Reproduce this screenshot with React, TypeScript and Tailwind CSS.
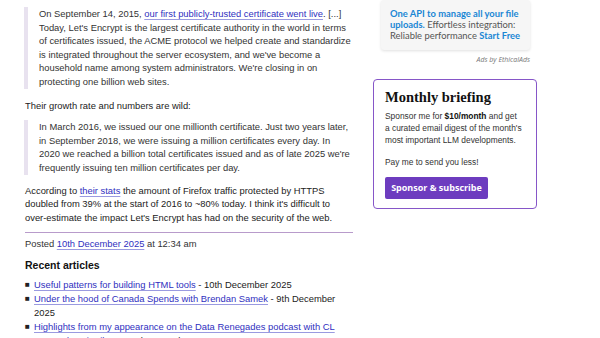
import React from "react";

const link = "text-[#3030c0] underline decoration-[#9a9ae0] underline-offset-[2px]";

const recent = [
  { title: "Useful patterns for building HTML tools", date: "10th December 2025" },
  { title: "Under the hood of Canada Spends with Brendan Samek", date: "9th December 2025" },
  { title: "Highlights from my appearance on the Data Renegades podcast with CL Kao and Dori Wilson", date: "26th November 2025" },
];

export default function App() {
  return (
    <div className="w-[600px] h-[338px] overflow-hidden bg-white flex font-['Liberation_Sans',Arial,sans-serif] text-[#222]">
      {/* Main column */}
      <div className="ml-[24px] w-[329px] shrink-0 pt-[7px] text-[9.4px] leading-[13.6px]">
        <blockquote className="border-l-4 border-[#e8e2ef] pl-[11px] text-[#333]">
          On September 14, 2015, <a className={link}>our first publicly-trusted certificate went live</a>. [...] Today,
          Let's Encrypt is the largest certificate authority in the world in terms of certificates issued, the ACME
          protocol we helped create and standardize is integrated throughout the server ecosystem, and we've become a
          household name among system administrators. We're closing in on protecting one billion web sites.
        </blockquote>
        <p className="mt-[10px] pl-[1px]">Their growth rate and numbers are wild:</p>
        <blockquote className="mt-[8px] border-l-4 border-[#e8e2ef] pl-[11px] text-[#333]">
          In March 2016, we issued our one millionth certificate. Just two years later, in September 2018, we were
          issuing a million certificates every day. In 2020 we reached a billion total certificates issued and as of
          late 2025 we're frequently issuing ten million certificates per day.
        </blockquote>
        <p className="mt-[9px] pl-[1px]">
          According to <a className={link}>their stats</a> the amount of Firefox traffic protected by HTTPS doubled
          from 39% at the start of 2016 to ~80% today. I think it's difficult to over-estimate the impact Let's Encrypt
          has had on the security of the web.
        </p>
        <div className="mt-[8px] ml-[1px] border-t border-[#b89bcb]" />
        <p className="mt-[4px] pl-[1px] text-[#333]">
          Posted <a className={link}>10th December 2025</a> at 12:34 am
        </p>
        <h3 className="mt-[8px] pl-[1px] font-bold text-[10.5px] text-[#111]">Recent articles</h3>
        <ul className="mt-[5px] pl-[9px]">
          {recent.map((r) => (
            <li key={r.title} className="mb-[1px] flex">
              <span className="w-[9px] shrink-0 -ml-[8px] text-[8px]">■</span>
              <span>
                <a className={link}>{r.title}</a> - {r.date}
              </span>
            </li>
          ))}
        </ul>
      </div>

      {/* Sidebar */}
      <div className="ml-[20px] w-[164px] shrink-0 flex flex-col">
        <div className="ml-[8px] w-[149px] bg-[#f6f6f6] rounded-[3px] shadow-[0_1px_3px_rgba(0,0,0,0.12)] px-[9px] pt-[8px] pb-[9px] font-['Lato',sans-serif] text-[9.4px] leading-[11px] text-[#555]">
          <span className="font-bold text-[#1a86d4]">One API to manage all your file uploads.</span> Effortless
          integration: Reliable performance <span className="font-bold text-[#1a86d4]">Start Free</span>
        </div>
        <div className="w-[157px] text-right mt-[5px] italic text-[7px] text-[#777] font-['Open_Sans',sans-serif]">
          Ads by EthicalAds
        </div>
        <div className="mt-[13px] h-[130px] border-[1.5px] border-[#8656c8] rounded-[4px] px-[11px] pt-[8px] text-[#333]">
          <h2 className="font-['Liberation_Serif',Georgia,serif] font-bold text-[14.5px] leading-[18px] text-[#111]">
            Monthly briefing
          </h2>
          <p className="mt-[4px] text-[8.4px] leading-[12px]">
            Sponsor me for <b className="text-[#111]">$10/month</b> and get
            <br />a curated email digest of the month's most important LLM developments.
          </p>
          <p className="mt-[10px] text-[8.4px] leading-[12px]">Pay me to send you less!</p>
          <button className="mt-[9px] w-[103px] h-[22px] bg-[#6d3cbf] rounded-[2px] text-white font-bold text-[9px] font-['Open_Sans',sans-serif]">
            Sponsor &amp; subscribe
          </button>
        </div>
      </div>
    </div>
  );
}
